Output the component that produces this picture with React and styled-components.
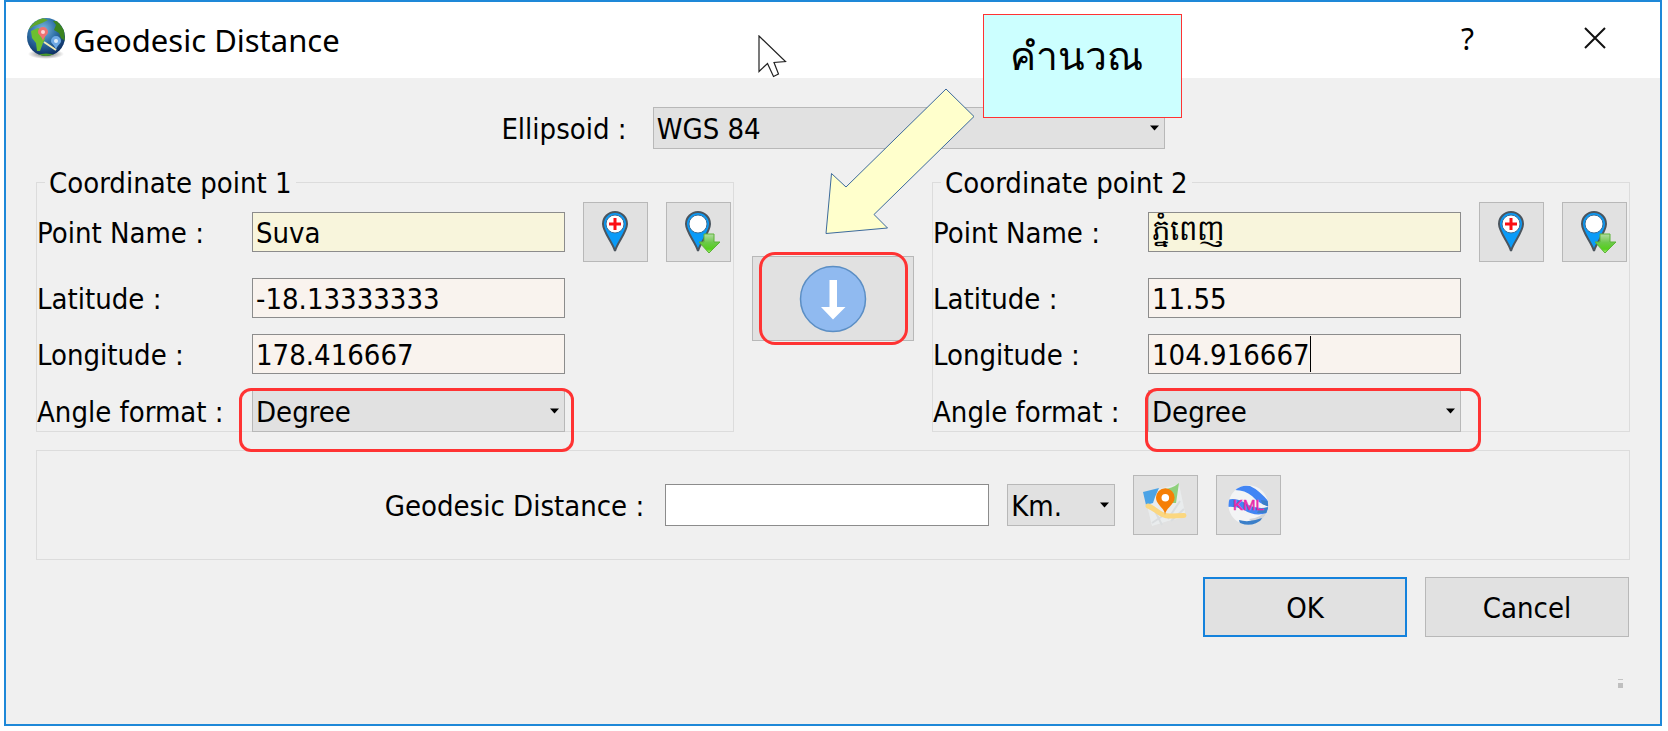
import React, { useState } from 'react';
import styled, { createGlobalStyle } from 'styled-components';

const GlobeIcon = () => (
    <svg width="42" height="44" viewBox="0 0 42 44" aria-hidden="true">
        <defs>
            <radialGradient id="sea" cx="0.42" cy="0.3" r="0.7">
                <stop offset="0" stopColor="#7db8e0" />
                <stop offset="0.5" stopColor="#2f71a8" />
                <stop offset="1" stopColor="#0c2f63" />
            </radialGradient>
            <radialGradient id="shade">
                <stop offset="0" stopColor="#000" stopOpacity="0.6" />
                <stop offset="1" stopColor="#000" stopOpacity="0" />
            </radialGradient>
            <clipPath id="globeClip"><circle cx="21" cy="21" r="19" /></clipPath>
        </defs>
        <ellipse cx="21" cy="38" rx="18" ry="5" fill="url(#shade)" />
        <circle cx="21" cy="21" r="19" fill="url(#sea)" />
        <g clipPath="url(#globeClip)">
            <path d="M3 14 Q9 4 18 2 L23 4 L17 7 L9 10 Z" fill="#5fa62c" />
            <path d="M6 15 L13 12 L19 15 L20 23 L18 27 L15 35 L12 35 L11 27 L7 22 Z" fill="#6cc02f" />
            <path d="M28 5 L33 5 L39 14 L40 25 L36 22 L34 17 L29 14 L31 9 Z" fill="#3b8420" />
            <path d="M12 39 Q21 36 30 39 L26 42 L14 42 Z" fill="#4c9a2a" />
        </g>
        <path d="M19 26 L31 34" stroke="#f3ecb4" strokeWidth="2" />
        <path d="M18 25 C17 20 13 19 13 16 A5 5 0 0 1 23 16 C23 19 19 20 18 25 Z" fill="#ee7272" />
        <circle cx="18" cy="16" r="2" fill="#fbdada" />
        <path d="M31 34 C30 29 26 28 26 25 A5 5 0 0 1 36 25 C36 28 32 29 31 34 Z" fill="#6ea8e4" />
        <circle cx="31" cy="25" r="2" fill="#dcecfb" />
    </svg>
);

const PinShape = () => (
    <>
        <path d="M27 43 C25 35 15 24 15 16 A12 12 0 0 1 39 16 C39 24 29 35 27 43 Z" fill="#0a9bf8" stroke="#4b555e" strokeWidth="2" />
        <circle cx="27" cy="16" r="9" fill="#fff" stroke="#3d6f97" strokeWidth="1" />
    </>
);

const AddPinIcon = () => (
    <svg width="56" height="48" viewBox="0 0 56 48" aria-hidden="true">
        <PinShape />
        <path d="M27 10 V22 M21 16 H33" stroke="#fb0f14" strokeWidth="3" />
    </svg>
);

const GetPinIcon = () => (
    <svg width="56" height="48" viewBox="0 0 56 48" aria-hidden="true">
        <defs>
            <linearGradient id="leaf" x1="0" y1="0" x2="0" y2="1">
                <stop offset="0" stopColor="#b4dca4" />
                <stop offset="0.45" stopColor="#6cc94a" />
                <stop offset="0.8" stopColor="#55cf1c" />
                <stop offset="1" stopColor="#b9f78c" />
            </linearGradient>
        </defs>
        <PinShape />
        <path d="M33 26 H43 V34 H49 L38 45 L28 34 H33 Z" fill="url(#leaf)" stroke="#5cb338" strokeWidth="1" />
    </svg>
);

const DownIcon = () => (
    <svg width="68" height="68" viewBox="0 0 68 68" aria-hidden="true">
        <circle cx="34" cy="34" r="32.5" fill="#90baf0" stroke="#5b8ec4" strokeWidth="1.5" />
        <path d="M30.5 15 H38 V42 H46.5 L34 54.5 L22 42 H30.5 Z" fill="#fff" />
    </svg>
);

const MapIcon = () => (
    <svg width="56" height="48" viewBox="0 0 56 48" aria-hidden="true">
        <path d="M6 12 L20 8 L41 3 L48 36 L30 40 L14 45 Z" fill="#e9eced" />
        <path d="M17 30 L24 44 M30 38 L42 20 M33 40 L46 28 M14 42 L26 34" stroke="#dadddf" strokeWidth="2" />
        <path d="M5 11 L21 7 L17 16 L15 22 L8 24 Z" fill="#4ba3e6" />
        <path d="M25 8 Q34 8 41 2 L38 22 L34 22 L24 14 Z" fill="#8fd07c" />
        <path d="M10 25 C17 27 22 36 34 35 L46 34.5" fill="none" stroke="#fbd780" strokeWidth="5" strokeLinecap="round" />
        <path d="M27 34 C27 27 18 24 18 16.5 A9.3 9.3 0 0 1 36.6 16.5 C36.6 24 27.5 27 27 34 Z" fill="#f57f06" />
        <circle cx="27.3" cy="16.7" r="3.8" fill="#fff" />
    </svg>
);

const KmlIcon = () => (
    <svg width="56" height="48" viewBox="0 0 56 48" aria-hidden="true">
        <defs>
            <clipPath id="kmlClip"><circle cx="27.3" cy="24" r="19.8" /></clipPath>
        </defs>
        <circle cx="27.3" cy="24" r="19.8" fill="#f3f4f5" />
        <g clipPath="url(#kmlClip)">
            <path d="M28 38 Q42 37 48 25 V40 L36 44 Z" fill="#cfd3d8" />
            <path d="M14 8 Q20 3 29 5 Q38 9 48 21 V25 Q38 23 31 15 Q24 9 14 9 Z" fill="#4285f4" />
            <path d="M5 19 Q15 16 24 22 Q35 29 48 26 L46 32 Q34 36 23 29 Q15 25 6 26 Z" fill="#4285f4" />
            <path d="M18 39 Q28 42 41 37 L38 43 L28 45 L19 43 Z" fill="#3b7fc9" />
            <path d="M40 19 L48 20 V26 L41 23 Z M38 28 L48 26 L45 32 L36 32 Z" fill="#3b7fc9" />
        </g>
        <text x="12" y="29" fontFamily="Liberation Sans, Arial, sans-serif" fontSize="15" fill="#e72aa8" stroke="#e72aa8" strokeWidth="0.5">KML</text>
    </svg>
);

const CloseIcon = () => (
    <svg width="22" height="22" viewBox="0 0 22 22" aria-hidden="true">
        <path d="M1 1 L21 21 M21 1 L1 21" stroke="#111" strokeWidth="2" />
    </svg>
);

const Select = ({ options, ...rest }) => (
    <SelectWrapper>
        <SelectBox {...rest}>
            {options.map((option) => <option key={option}>{option}</option>)}
        </SelectBox>
        <SelectArrow width="9" height="6" viewBox="0 0 9 6" aria-hidden="true">
            <path d="M0 0.5 H9 L4.5 5.5 Z" fill="#000" />
        </SelectArrow>
    </SelectWrapper>
);

function CoordinatePanel({ number, point, caret, mark }) {
    const [ values, setValues ] = useState(point);
    const change = (key) => (e) => setValues({ ...values, [key]: e.target.value });
    const id = (name) => `${name}-${number}`;
    return (
        <Panel>
            <Legend>Coordinate point {number}</Legend>
            <Fields>
                <Label htmlFor={id("name")}>Point Name :</Label>
                <Input id={id("name")} $color="#f8f5dc" value={values.name} onChange={change("name")} />
                <IconButton aria-label="Add point"><AddPinIcon /></IconButton>
                <IconButton aria-label="Get point"><GetPinIcon /></IconButton>

                <Label htmlFor={id("lat")}>Latitude :</Label>
                <Input id={id("lat")} $color="#f9f3ee" value={values.lat} onChange={change("lat")} />
                <Filler />

                <Label htmlFor={id("lng")}>Longitude :</Label>
                <InputWrapper>
                    <Input id={id("lng")} $color="#f9f3ee" value={values.lng} onChange={change("lng")} />
                    {caret && <Caret />}
                </InputWrapper>
                <Filler />

                <Label htmlFor={id("angle")}>Angle format :</Label>
                <InputWrapper>
                    <Select id={id("angle")} options={["Degree"]} />
                    <Highlight $inset={mark} $radius="12px" />
                </InputWrapper>
            </Fields>
        </Panel>
    );
}

function App() {
    const [ distance, setDistance ] = useState("");
    return (
        <>
            <GlobalStyle />
            <Window>
                <TitleBar>
                    <GlobeIcon />
                    <Title>Geodesic Distance</Title>
                    <TitleButton aria-label="Help">?</TitleButton>
                    <TitleButton aria-label="Close"><CloseIcon /></TitleButton>
                </TitleBar>
                <Content>
                    <EllipsoidRow>
                        <Label htmlFor="ellipsoid">Ellipsoid :</Label>
                        <EllipsoidField>
                            <Select id="ellipsoid" options={["WGS 84"]} />
                        </EllipsoidField>
                    </EllipsoidRow>
                    <Points>
                        <CoordinatePanel
                            number={1}
                            point={{ name: "Suva", lat: "-18.13333333", lng: "178.416667" }}
                            mark="-2px -9px -20px -13px"
                        />
                        <Calculate>
                            <CalculateButton aria-label="Calculate"><DownIcon /></CalculateButton>
                            <Highlight $inset="-4px 6px -4px 7px" $radius="16px" />
                            <Pointer width="29" height="43" viewBox="0 0 29 43" aria-hidden="true">
                                <path d="M1 1 L27.5 26.5 L16 27.5 L20.5 39 L15.5 41.5 L9.5 28.5 L1 36.5 Z" fill="#fff" stroke="#222" strokeWidth="1.2" />
                            </Pointer>
                            <Arrow width="150" height="147" viewBox="0 0 150 147" aria-hidden="true">
                                <path d="M121 1 L149 28.5 L49 126.5 L62.5 140 L1 145.5 L6.5 85.5 L21 99 Z" fill="#ffffcc" stroke="#3c6a9c" strokeWidth="1" />
                            </Arrow>
                            <Callout>คำนวณ</Callout>
                        </Calculate>
                        <CoordinatePanel
                            number={2}
                            point={{ name: "ភ្នំពេញ", lat: "11.55", lng: "104.916667" }}
                            mark="-2px -20px -20px -3px"
                            caret
                        />
                    </Points>
                    <ResultPanel>
                        <Label htmlFor="distance">Geodesic Distance :</Label>
                        <ResultField>
                            <Input id="distance" $color="#fff" $tall value={distance} onChange={(e) => setDistance(e.target.value)} />
                            <UnitField>
                                <Select aria-label="Unit" options={["Km."]} />
                            </UnitField>
                            <IconButton aria-label="Show on map"><MapIcon /></IconButton>
                            <IconButton aria-label="Export KML"><KmlIcon /></IconButton>
                        </ResultField>
                    </ResultPanel>
                    <Actions>
                        <ActionButton $primary>OK</ActionButton>
                        <ActionButton>Cancel</ActionButton>
                    </Actions>
                    <Grip />
                </Content>
            </Window>
        </>
    );
}

export default App;

const GlobalStyle = createGlobalStyle`
    * {
        box-sizing: border-box;
    }
    body {
        margin: 0;
        background: #fff;
        color: #000;
        font-family: "DejaVu Sans Condensed", "Noto Sans", sans-serif;
        font-size: 29px;
    }
    button, input, select {
        font: inherit;
        color: inherit;
        margin: 0;
    }
`;
const Window = styled.main`
    display: flex;
    flex-direction: column;
    min-height: calc(100vh - 5px);
    margin: 0 6px 5px 4px;
    border: 2px solid #1e88d8;
    background: #f0f0f0;
`;
const TitleBar = styled.header`
    display: flex;
    align-items: center;
    height: 76px;
    padding: 0 2px 4px 19px;
    background: #fff;
`;
const Title = styled.h1`
    flex: 1;
    margin: 0;
    padding: 4px 0 0 6px;
    font-family: "Noto Sans", sans-serif;
    font-size: 31px;
    font-weight: 400;
    line-height: 40px;
`;
const TitleButton = styled.button`
    display: flex;
    align-items: center;
    justify-content: center;
    width: 127px;
    height: 60px;
    padding: 0;
    border: 0;
    background: none;
    font-family: "Noto Sans", sans-serif;
    font-size: 30px;
`;
const Content = styled.div`
    padding: 29px 30px 0;
`;
const EllipsoidRow = styled.div`
    display: flex;
    align-items: center;
    justify-content: center;
    gap: 26px;
    margin-bottom: 16px;
`;
const EllipsoidField = styled.div`
    width: 512px;
`;
const Points = styled.div`
    display: grid;
    grid-template-columns: 1fr 162px 1fr;
    gap: 18px;
    align-items: center;
`;
const Panel = styled.fieldset`
    min-width: 0;
    margin: 0;
    padding: 3px 2px 0 0;
    border: 1px solid #dcdcdc;
`;
const Legend = styled.legend`
    margin-left: 8px;
    padding: 2px 4px 0;
    line-height: 32px;
`;
const Fields = styled.div`
    display: grid;
    grid-template-columns: 197px 1fr 65px 65px;
    gap: 16px 18px;
    align-items: center;
    margin-bottom: -1px;
`;
const Label = styled.label`
    padding-top: 2px;
    line-height: 38px;
    white-space: nowrap;
`;
const InputWrapper = styled.div`
    position: relative;
`;
const Input = styled.input`
    display: block;
    width: 100%;
    min-width: 0;
    height: ${({ $tall }) => ($tall ? "42px" : "40px")};
    padding: 2px 3px 0;
    border: 1px solid #8c8c8c;
    border-radius: 0;
    outline: none;
    background: ${({ $color }) => $color};
`;
const Caret = styled.span`
    position: absolute;
    top: 2px;
    left: 162px;
    width: 1px;
    height: 36px;
    background: #000;
`;
const Filler = styled.span`
    grid-column: span 2;
`;
const SelectWrapper = styled.div`
    position: relative;
`;
const SelectBox = styled.select`
    display: block;
    appearance: none;
    width: 100%;
    height: 42px;
    padding: 2px 20px 0 3px;
    border: 1px solid #b8b8b8;
    border-radius: 0;
    background: #e1e1e1;
`;
const SelectArrow = styled.svg`
    position: absolute;
    top: 18px;
    right: 6px;
    pointer-events: none;
`;
const IconButton = styled.button`
    display: flex;
    align-items: center;
    justify-content: center;
    flex: none;
    width: 65px;
    height: 60px;
    padding: 0;
    border: 1px solid #b8b8b8;
    background: #e1e1e1;
`;
const Calculate = styled.div`
    position: relative;
    z-index: 1;
`;
const CalculateButton = styled(IconButton)`
    width: 100%;
    height: 85px;
`;
const Highlight = styled.span`
    position: absolute;
    inset: ${({ $inset }) => $inset};
    border: 3px solid #ff3333;
    border-radius: ${({ $radius }) => $radius};
    pointer-events: none;
`;
const Pointer = styled.svg`
    position: absolute;
    left: 6px;
    bottom: calc(100% + 178px);
`;
const Arrow = styled.svg`
    position: absolute;
    left: 73px;
    bottom: calc(100% + 21px);
`;
const Callout = styled.div`
    position: absolute;
    left: 231px;
    bottom: calc(100% + 138px);
    width: 199px;
    height: 104px;
    padding: 12px 26px;
    border: 1px solid #ff3333;
    background: #ccffff;
    font-size: 39px;
    font-weight: 500;
    line-height: 60px;
    white-space: nowrap;
`;
const ResultPanel = styled.section`
    display: flex;
    align-items: center;
    justify-content: center;
    gap: 21px;
    margin-top: 18px;
    padding: 24px 0;
    border: 1px solid #dcdcdc;
`;
const ResultField = styled.div`
    display: flex;
    align-items: center;
    gap: 18px;
    width: 616px;
`;
const UnitField = styled.div`
    flex: none;
    width: 108px;
`;
const Actions = styled.div`
    display: flex;
    justify-content: flex-end;
    gap: 18px;
    margin-top: 17px;
    padding-right: 1px;
`;
const ActionButton = styled.button`
    width: 204px;
    height: 60px;
    padding: 2px 0 0;
    border: ${({ $primary }) => ($primary ? "2px solid #1482dc" : "1px solid #b8b8b8")};
    background: #e1e1e1;
`;
const Grip = styled.div`
    width: 5px;
    height: 9px;
    margin: 42px 7px 0 auto;
    border-top: 1px solid #c4c4c4;
    border-bottom: 5px solid #bfbfbf;
`;
